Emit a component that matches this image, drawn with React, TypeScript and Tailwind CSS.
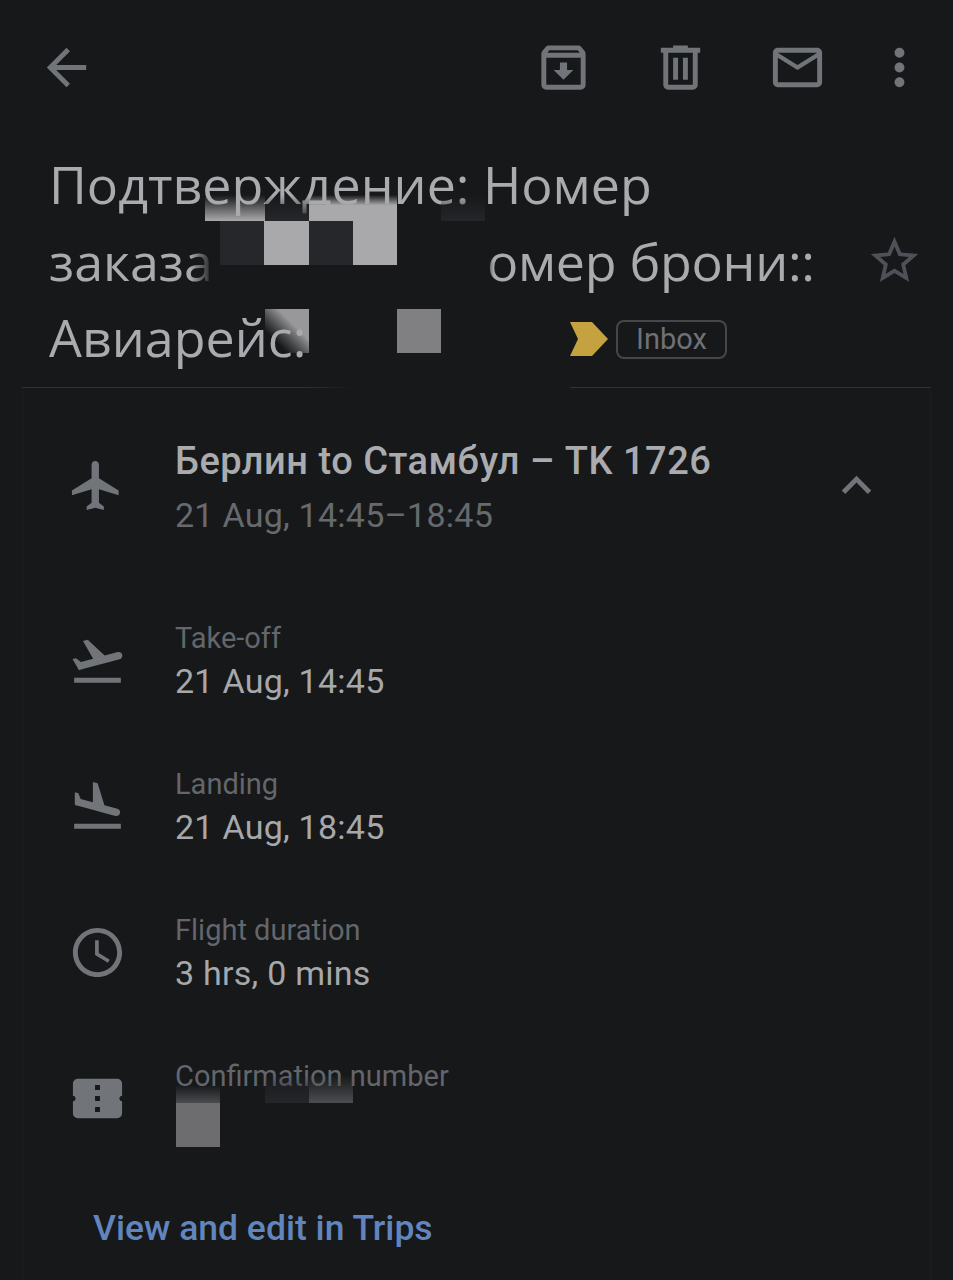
const details = [
  { label: "Take-off", value: "21 Aug, 14:45", icon: "M2.5 19h19v2h-19zm19.57-9.36c-.21-.8-1.04-1.28-1.84-1.06L14.92 10l-6.9-6.43-1.93.51 4.14 7.17-4.97 1.33-1.97-1.54-1.45.39 1.82 3.16.77 1.33 1.6-.43 5.31-1.42 4.35-1.16L21 11.49c.81-.23 1.28-1.05 1.07-1.85z" },
  { label: "Landing", value: "21 Aug, 18:45", icon: "M2.5 19h19v2h-19zm7.18-5.73l4.35 1.16 5.31 1.42c.8.21 1.62-.26 1.84-1.06.21-.8-.26-1.62-1.06-1.84l-5.31-1.42-2.76-9.02L10.12 2v8.28L5.15 8.95l-.93-2.32-1.45-.39v5.17l1.6.43 5.31 1.43z" },
  { label: "Flight duration", value: "3 hrs, 0 mins", icon: "M11.99 2C6.47 2 2 6.48 2 12s4.47 10 9.99 10C17.52 22 22 17.52 22 12S17.52 2 11.99 2zM12 20c-4.42 0-8-3.58-8-8s3.58-8 8-8 8 3.58 8 8-3.58 8-8 8zm.5-13H11v6l5.25 3.15.75-1.23-4.5-2.67z" },
  { label: "Confirmation number", value: "", icon: "M4 4h16c1.1 0 2 .9 2 2v4.9c-.6 0-1.1.5-1.1 1.1s.5 1.1 1.1 1.1V18c0 1.1-.9 2-2 2H4c-1.1 0-2-.9-2-2v-4.900c.6 0 1.100-.5 1.100-1.100S2.600 10.900 2 10.900V6c0-1.100.9-2 2-2zm9 13.500v-2h-2v2h2zm0-4.500v-2h-2v2h2zm0-4.500v-2h-2v2h2z" },
];

function Icon({ d, className }: { d: string; className: string }) {
  return (
    <svg viewBox="0 0 24 24" className={className} fill="currentColor">
      <path d={d} />
    </svg>
  );
}

export default function App() {
  return (
    <div className="relative h-[1280px] w-[953px] overflow-hidden bg-[#17181a] font-['Roboto',sans-serif]">
      {/* Toolbar */}
      <div className="flex h-[135px] items-center pl-[37px] pr-[24px] pb-[1px] text-[#717478]">
        <Icon className="h-[59px] w-[59px]" d="M20 11H7.830l5.590-5.590L12 4l-8 8 8 8 1.410-1.410L7.830 13H20v-2z" />
        <div className="ml-auto flex items-center">
          <Icon className="h-[59px] w-[59px]" d="M20.540 5.230l-1.390-1.680C18.880 3.210 18.470 3 18 3H6c-.47 0-.88.21-1.160.55L3.460 5.230C3.170 5.570 3 6.020 3 6.500V19c0 1.100.9 2 2 2h14c1.100 0 2-.9 2-2V6.500c0-.48-.17-.93-.46-1.270zM6.240 5h11.520l.81.97H5.440l.8-.97zM5 19V8h14v11H5zm8.450-9h-2.900v3H8l4 4 4-4h-2.550z" />
          <Icon className="ml-[58px] h-[59px] w-[59px]" d="M15 4V3H9v1H4v2h1v13c0 1.100.9 2 2 2h10c1.100 0 2-.9 2-2V6h1V4h-5zm2 15H7V6h10v13zM9 8h2v9H9zm4 0h2v9h-2z" />
          <Icon className="ml-[58px] h-[59px] w-[59px]" d="M22 6c0-1.100-.9-2-2-2H4c-1.100 0-2 .9-2 2v12c0 1.100.9 2 2 2h16c1.100 0 2-.9 2-2V6zm-2 0l-8 5-8-5h16zm0 12H4V8l8 5 8-5v10z" />
          <Icon className="ml-[43px] h-[59px] w-[59px]" d="M12 8c1.100 0 2-.9 2-2s-.9-2-2-2-2 .9-2 2 .9 2 2 2zm0 2c-1.100 0-2 .9-2 2s.9 2 2 2 2-.9 2-2-.9-2-2-2zm0 6c-1.100 0-2 .9-2 2s.9 2 2 2 2-.9 2-2-.9-2-2-2z" />
        </div>
      </div>

      {/* Subject */}
      <div className="mt-[11px] pl-[49px] pr-[30px] font-['Open_Sans',sans-serif] text-[52px] leading-[76.500px] text-[#a9abae]">
        <div>Подтверждение: Номер</div>
        <div className="flex items-center">
          <span className="w-[438px]">заказа</span>
          <span className="tracking-[-0.3px]">омер брони::</span>
          <Icon className="ml-auto h-[57px] w-[57px] text-[#4e5157]" d="M22 9.240l-7.190-.62L12 2 9.190 8.630 2 9.240l5.460 4.730L5.820 21 12 17.270 18.180 21l-1.630-7.030L22 9.240zM12 15.400l-3.760 2.270 1-4.280-3.320-2.880 4.380-.38L12 6.100l1.710 4.040 4.380.38-3.320 2.880 1 4.280L12 15.400z" />
        </div>
        <div className="flex items-center">
          <span className="relative z-10 w-[521px]">Авиарейс:</span>
          <svg viewBox="0 0 38 34" className="mt-[4px] h-[34px] w-[38px]">
            <path d="M0 0h22l16 17-16 17H0l8-17z" fill="#c4a23f" />
          </svg>
          <span className="ml-[8px] mt-[4px] flex h-[39px] w-[111px] items-center justify-center rounded-lg border-2 border-[#45474b] font-['Roboto',sans-serif] text-[29px] text-[#6e7175]">
            Inbox
          </span>
        </div>
      </div>

      {/* Card */}
      <div className="mx-[22px] mt-[11px] h-[900px] border-x border-t border-x-[#1c1d20] border-t-[#333438]">
        <div className="flex h-[228px] pt-[50px]">
          <Icon className="ml-[44px] mt-[18px] h-[59px] w-[59px] text-[#717478]" d="M21 16v-2l-8-5V3.500c0-.83-.67-1.500-1.500-1.500S10 2.670 10 3.500V9l-8 5v2l8-2.500V19l-2 1.500V22l3.500-1 3.500 1v-1.500L13 19v-5.500l8 2.500z" />
          <div className="ml-[49px]">
            <div className="h-[54px] text-[38px] leading-[46px] font-medium tracking-[0.5px] text-[#a9abae]">Берлин to Стамбул – TK 1726</div>
            <div className="text-[34px] leading-[46px] tracking-[0.25px] text-[#666a6e]">21 Aug, 14:45–18:45</div>
          </div>
          <Icon className="ml-auto mr-[44px] mt-[18px] h-[59px] w-[59px] text-[#717478]" d="M12 8l-6 6 1.410 1.410L12 10.830l4.590 4.580L18 14z" />
        </div>

        {details.map((row) => (
          <div key={row.label} className="flex h-[146px]">
            <Icon className="ml-[45px] mt-[15px] h-[59px] w-[59px] text-[#717478]" d={row.icon} />
            <div className="ml-[48px]">
              <div className="h-[43px] text-[29px] leading-[44px] text-[#63666b]">{row.label}</div>
              <div className="text-[34px] leading-[44px] tracking-[0.25px] text-[#a6a8ab]">{row.value}</div>
            </div>
          </div>
        ))}

        <div className="mt-[6px] pl-[70px] text-[35.500px] leading-[44px] font-medium text-[#6285bd]">View and edit in Trips</div>
      </div>

      {/* Redacted blocks over the subject */}
      <div className="absolute left-[205px] top-[195px] flex flex-col">
        <div className="flex h-[26px]">
          <div className="w-[60px] bg-gradient-to-t from-[#a9a9ab] to-transparent" />
          <div className="w-[44px] bg-gradient-to-t from-[#26272a] to-transparent" />
          <div className="w-[88px] bg-gradient-to-t from-[#a9a9ab] from-60% to-transparent" />
          <div className="ml-[44px] w-[44px] bg-gradient-to-t from-[#25262a] to-transparent" />
        </div>
        <div className="ml-[15px] flex h-[44px]">
          <div className="w-[44px] bg-[#26272a]" />
          <div className="w-[45px] bg-[#a9a9ab]" />
          <div className="w-[44px] bg-[#26272a]" />
          <div className="w-[44px] bg-[#a9a9ab]" />
        </div>
      </div>
      <div className="absolute left-[190px] top-[238px] h-[60px] w-[24px] bg-gradient-to-r from-transparent to-[#17181a]" />
      <div className="absolute left-[484px] top-[238px] h-[60px] w-[10px] bg-gradient-to-l from-transparent to-[#17181a]" />
      <div className="absolute left-[265px] top-[309px] flex h-[44px] gap-[88px]">
        <div className="w-[44px] bg-gradient-to-bl from-[#98989a] from-35% to-[#17181a] to-75%" />
        <div className="w-[44px] bg-[#808082]" />
      </div>
      <div className="absolute left-[300px] top-[386px] h-[3px] w-[270px] bg-gradient-to-r from-transparent via-[#17181a] via-20% to-[#17181a] to-95%" />

      {/* Redacted blocks over the confirmation number */}
      <div className="absolute left-[176px] top-[1075px] flex h-[72px]">
        <div className="flex w-[44px] flex-col justify-end">
          <div className="h-[18px] bg-gradient-to-t from-[#4a4b4e] to-transparent" />
          <div className="h-[44px] bg-[#6d6d6f]" />
        </div>
        <div className="ml-[45px] h-[28px] w-[44px] bg-gradient-to-t from-[#25272a] to-transparent" />
        <div className="h-[28px] w-[44px] bg-gradient-to-t from-[#4c4d50] to-transparent" />
      </div>
    </div>
  );
}
